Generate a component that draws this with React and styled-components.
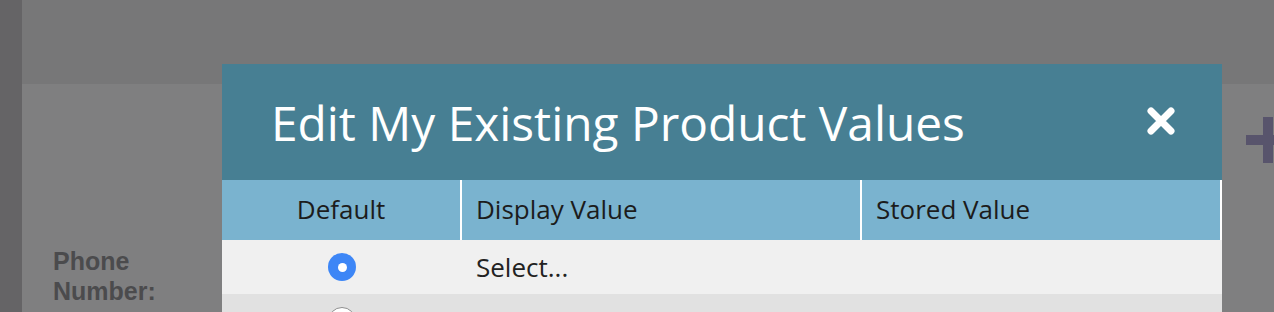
import React from "react";
import styled, { createGlobalStyle } from "styled-components";

const Global = createGlobalStyle`
  html, body { margin: 0; padding: 0; overflow: hidden; }
  body { width: 1274px; height: 312px; background: #7f7f80; }
`;

const Page = styled.div`
  position: relative;
  display: flex;
  width: 1274px;
  height: 312px;
  overflow: hidden;
`;

const SideStrip = styled.div`
  width: 22px;
  flex: none;
  background: #656466;
`;

const Main = styled.div`
  flex: 1;
  display: flex;
  flex-direction: column;
`;

const TopBar = styled.div`
  height: 84px;
  background: #777778;
`;

const Content = styled.div`
  flex: 1;
  background: #7f7f80;
  padding: 162px 0 0 31px;
`;

const FieldLabel = styled.div`
  font-family: "Liberation Sans", Arial, sans-serif;
  font-weight: 700;
  font-size: 25px;
  line-height: 30px;
  color: #4b4b4d;
  width: 140px;
`;

const PlusIcon = styled.svg`
  position: absolute;
  left: 1245px;
  top: 116px;
  filter: blur(0.5px);
`;

const Modal = styled.div`
  position: absolute;
  left: 222px;
  top: 64px;
  width: 1000px;
  font-family: "Open Sans", "Noto Sans", sans-serif;
`;

const ModalHeader = styled.div`
  height: 116px;
  background: #477f93;
  display: flex;
  align-items: center;
  justify-content: space-between;
  padding: 0 46px 0 49px;
  box-sizing: border-box;
`;

const Title = styled.h1`
  margin: 0;
  font-weight: 400;
  font-size: 47.8px;
  color: #ffffff;
  margin-top: 0;
`;

const CloseIcon = styled.svg`
  filter: blur(0.6px);
  margin-top: -2px;
`;

const Row = styled.div`
  display: grid;
  grid-template-columns: 240px 400px 360px;
  height: ${(p) => p.$h}px;
  background: ${(p) => p.$bg};
`;

const HeadCell = styled.div`
  display: flex;
  align-items: center;
  justify-content: ${(p) => (p.$center ? "center" : "flex-start")};
  padding-left: ${(p) => (p.$center ? 0 : 14)}px;
  padding-bottom: 2px;
  border-right: 2px solid #ffffff;
  font-size: 26px;
  color: #1c1c1c;
`;

const Cell = styled.div`
  display: flex;
  align-items: center;
  justify-content: ${(p) => (p.$center ? "center" : "flex-start")};
  padding-left: ${(p) => (p.$center ? 0 : 14)}px;
  font-size: 26px;
  color: #222222;
`;

const Radio = styled.span`
  width: 28px;
  height: 28px;
  border-radius: 50%;
  box-sizing: border-box;
  display: inline-flex;
  align-items: center;
  justify-content: center;
  background: ${(p) => (p.$checked ? "#3d86f6" : "#ffffff")};
  border: ${(p) => (p.$checked ? "none" : "1.5px solid #8e8e8e")};
  &::after {
    content: "";
    width: 9px;
    height: 9px;
    border-radius: 50%;
    background: #ffffff;
    display: ${(p) => (p.$checked ? "block" : "none")};
  }
`;

const rows = [
  { checked: true, display: "Select...", stored: "", bg: "#f0f0f0" },
  { checked: false, display: "Pay Per Sale", stored: "Pay Per Sale", bg: "#e1e1e1" },
];

export default function App() {
  return (
    <>
      <Global />
      <Page>
        <SideStrip />
        <Main>
          <TopBar />
          <Content>
            <FieldLabel>Phone Number:</FieldLabel>
          </Content>
        </Main>
        <PlusIcon width="48" height="48" viewBox="0 0 48 48">
          <rect x="1" y="19" width="46" height="10" fill="#58546c" />
          <rect x="18" y="1" width="10" height="46" fill="#58546c" />
        </PlusIcon>
        <Modal>
          <ModalHeader>
            <Title>Edit My Existing Product Values</Title>
            <CloseIcon width="30" height="30" viewBox="0 0 30 30">
              <path
                d="M5 5 L25 25 M25 5 L5 25"
                stroke="#ffffff"
                strokeWidth="7"
                strokeLinecap="round"
              />
            </CloseIcon>
          </ModalHeader>
          <Row $h={60} $bg="#7ab3cf">
            <HeadCell $center>Default</HeadCell>
            <HeadCell>Display Value</HeadCell>
            <HeadCell>Stored Value</HeadCell>
          </Row>
          {rows.map((r, i) => (
            <Row key={i} $h={54} $bg={r.bg}>
              <Cell $center>
                <Radio $checked={r.checked} />
              </Cell>
              <Cell>{r.display}</Cell>
              <Cell>{r.stored}</Cell>
            </Row>
          ))}
        </Modal>
      </Page>
    </>
  );
}
